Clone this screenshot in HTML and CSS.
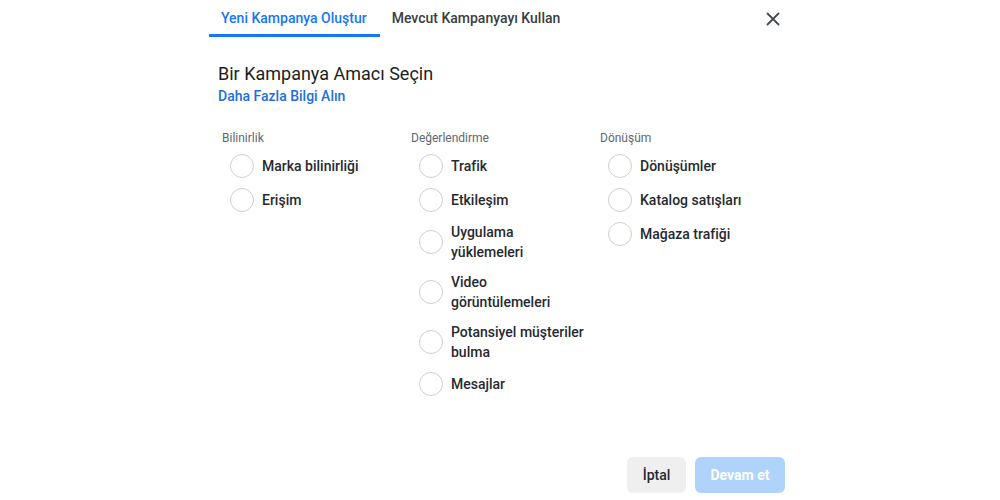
FILE: index.html
```html
<!DOCTYPE html>
<html lang="tr">
<head>
<meta charset="utf-8">
<link rel="stylesheet" href="styles.css">
</head>
<body>
<div class="modal">
  <div class="tabbar">
    <div class="tab active">Yeni Kampanya Oluştur</div>
    <div class="tab">Mevcut Kampanyayı Kullan</div>
    <div class="close" aria-label="Kapat">
      <svg width="14" height="14" viewBox="0 0 14 14"><path d="M1.5 1.5 L12.5 12.5 M12.5 1.5 L1.5 12.5" stroke="#444950" stroke-width="1.8" stroke-linecap="round" fill="none"/></svg>
    </div>
  </div>
  <div class="intro">
    <div class="title">Bir Kampanya Amacı Seçin</div>
    <div class="link">Daha Fazla Bilgi Alın</div>
  </div>
  <div class="columns">
    <div class="col">
      <div class="heading">Bilinirlik</div>
      <div class="item"><span class="radio"></span><span class="label">Marka bilinirliği</span></div>
      <div class="item"><span class="radio"></span><span class="label">Erişim</span></div>
    </div>
    <div class="col">
      <div class="heading">Değerlendirme</div>
      <div class="item"><span class="radio"></span><span class="label">Trafik</span></div>
      <div class="item"><span class="radio"></span><span class="label">Etkileşim</span></div>
      <div class="item"><span class="radio"></span><span class="label">Uygulama yüklemeleri</span></div>
      <div class="item"><span class="radio"></span><span class="label">Video görüntülemeleri</span></div>
      <div class="item"><span class="radio"></span><span class="label">Potansiyel müşteriler bulma</span></div>
      <div class="item"><span class="radio"></span><span class="label">Mesajlar</span></div>
    </div>
    <div class="col">
      <div class="heading">Dönüşüm</div>
      <div class="item"><span class="radio"></span><span class="label">Dönüşümler</span></div>
      <div class="item"><span class="radio"></span><span class="label">Katalog satışları</span></div>
      <div class="item"><span class="radio"></span><span class="label">Mağaza trafiği</span></div>
    </div>
  </div>
  <div class="footer">
    <button class="btn secondary">İptal</button>
    <button class="btn primary">Devam et</button>
  </div>
</div>
</body>
</html>
```
FILE: styles.css
```css
* { box-sizing: border-box; }
html, body { margin: 0; padding: 0; background: #ffffff; }
body {
  font-family: Roboto, "Liberation Sans", Arial, sans-serif;
  color: #1c1e21;
  -webkit-font-smoothing: antialiased;
}
.modal {
  width: 576px;
  margin-left: 209px;
}
.tabbar {
  display: flex;
  align-items: flex-start;
  height: 37px;
}
.tab {
  height: 37px;
  padding: 9px 13px 0 12px;
  font-size: 14px;
  line-height: 18px;
  font-weight: 500;
  color: #3a3d42;
  border-bottom: 3px solid transparent;
  white-space: nowrap;
}
.tab.active {
  color: #1877f2;
  border-bottom-color: #1877f2;
}
.close {
  margin-left: auto;
  margin-right: 5px;
  margin-top: 12px;
  width: 14px;
  height: 14px;
  display: flex;
}
.intro {
  margin-top: 25px;
  padding-left: 9px;
}
.title {
  font-size: 18px;
  line-height: 24px;
  font-weight: 400;
  color: #1c1e21;
}
.link {
  font-size: 14px;
  line-height: 20px;
  font-weight: 500;
  color: #216fdb;
}
.columns {
  display: grid;
  grid-template-columns: 189px 189px 189px;
  margin-top: 24px;
  padding-left: 13px;
}
.col {
  display: flex;
  flex-direction: column;
  gap: 10px;
}
.heading {
  font-size: 12px;
  line-height: 16px;
  color: #606770;
  margin-bottom: -2px;
}
.item {
  display: flex;
  align-items: center;
  gap: 8px;
  padding-left: 8px;
  min-height: 24px;
}
.radio {
  flex: none;
  width: 24px;
  height: 24px;
  border-radius: 50%;
  border: 1px solid #ccd0d5;
  background: #ffffff;
}
.label {
  font-size: 14px;
  line-height: 20px;
  font-weight: 500;
  color: #262a30;
  max-width: 136px;
}
.footer {
  display: flex;
  justify-content: flex-end;
  gap: 9px;
  margin-top: 61px;
}
.btn {
  font-family: inherit;
  font-size: 14px;
  height: 36px;
  border: none;
  border-radius: 6px;
  padding: 0;
  white-space: nowrap;
}
.btn.secondary {
  background: #efefef;
  color: #262a30;
  font-weight: 500;
  width: 59px;
}
.btn.primary {
  background: #b0d3fb;
  color: #ffffff;
  font-weight: 700;
  width: 90px;
}
```
